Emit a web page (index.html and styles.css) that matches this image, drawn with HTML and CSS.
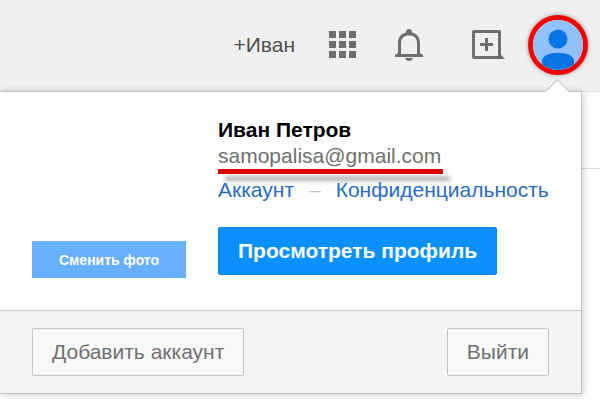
FILE: index.html
```html
<!DOCTYPE html>
<html lang="ru">
<head>
  <meta charset="utf-8">
  <meta name="viewport" content="width=device-width,initial-scale=1">
  <title>Аккаунт</title>
  <link rel="stylesheet" href="styles.css">
</head>
<body>
  <header class="topbar">
    <a class="plus-name" href="#">+Иван</a>
    <button class="icon-btn apps" type="button" aria-label="Приложения">
      <svg width="27" height="27" viewBox="0 0 27 27" fill="#6e6e6e">
        <path d="M0 0h7v7H0zM10 0h7v7h-7zM20 0h7v7h-7zM0 10h7v7H0zM10 10h7v7h-7zM20 10h7v7h-7zM0 20h7v7H0zM10 20h7v7h-7zM20 20h7v7h-7z"/>
      </svg>
    </button>
    <button class="icon-btn bell" type="button" aria-label="Уведомления">
      <svg width="28" height="32" viewBox="0 0 28 32" fill="#6e6e6e">
        <path d="M11 3.500V3a3 3 0 0 1 6 0v.5c5 1 8 5 8 10.500v10l3 2v2H0v-2l3-2V14C3 8.500 6 4.500 11 3.500zM6 25h16V14c0-5-3-7.500-8-7.500S6 9 6 14z" fill-rule="evenodd"/>
        <path d="M10 29h8c-1 4-7 4-8 0z"/>
      </svg>
    </button>
    <button class="icon-btn share" type="button" aria-label="Поделиться">
      <svg width="33" height="29" viewBox="0 0 33 29" fill="#6e6e6e">
        <path d="M2 0h25q2 0 2 2v23l4 4H2q-2 0-2-2V2q0-2 2-2zM3 3v23h23V3z" fill-rule="evenodd"/>
        <path d="M13 8h3v5h5v3h-5v5h-3v-5H8v-3h5z"/>
      </svg>
    </button>
    <button class="icon-btn avatar" type="button" aria-label="Иван Петров">
      <svg width="50" height="50" viewBox="1 1 50 50">
        <circle cx="26" cy="26" r="26" fill="#91c1fb"/>
        <circle cx="26" cy="20" r="9.500" fill="#0b74e5"/>
        <path d="M10 46v-4c0-11 32-11 32 0v4a26 26 0 0 1-32 0z" fill="#0b74e5"/>
      </svg>
    </button>
  </header>

  <main class="page">
    <div class="toolbar"></div>
    <section class="account-menu">
      <div class="profile">
        <button class="change-photo" type="button">Сменить фото</button>
        <div class="info">
          <div class="name">Иван Петров</div>
          <div class="email">samopalisa@gmail.com</div>
          <div class="links">
            <a href="#">Аккаунт</a>
            <span class="dash">–</span>
            <a href="#">Конфиденциальность</a>
          </div>
          <button class="view-profile" type="button">Просмотреть профиль</button>
        </div>
      </div>
      <div class="actions">
        <button class="btn" type="button">Добавить аккаунт</button>
        <button class="btn" type="button">Выйти</button>
      </div>
    </section>
  </main>
</body>
</html>
```
FILE: styles.css
```css
* {
  box-sizing: border-box;
}

body {
  display: flex;
  flex-direction: column;
  min-height: 100vh;
  margin: 0;
  background: #fff;
  font-family: "Liberation Sans", Arial, sans-serif;
  font-size: 21px;
  line-height: 26px;
}

button {
  margin: 0;
  font-family: inherit;
  cursor: pointer;
}

a {
  text-decoration: none;
}

/* top bar */
.topbar {
  display: flex;
  align-items: center;
  justify-content: flex-end;
  height: 92px;
  padding: 0 12px 2px 0;
  background: #f0f0f0;
  border-bottom: 1px solid #e0e0e0;
}

.plus-name {
  margin-right: 34px;
  color: #505050;
}

.icon-btn {
  padding: 0;
  border: 0;
  background: none;
}

.icon-btn svg {
  display: block;
}

.apps {
  margin-right: 39px;
}

.bell {
  margin-right: 49px;
}

.share {
  margin-right: 23px;
}

.avatar {
  border: 5px solid #f80000;
  border-radius: 50%;
  box-shadow: 0 0 4px rgba(0, 0, 0, .4);
}

.avatar svg {
  border-radius: 50%;
}

/* page under the bar */
.page {
  position: relative;
  flex: 1;
}

.toolbar {
  height: 77px;
  border-bottom: 1px solid #dcdcdc;
}

/* drop-down */
.account-menu {
  position: absolute;
  top: -1px;
  left: 0;
  right: 18px;
  background: #fff;
  border: 1px solid #c2c2c2;
  border-left: 0;
  box-shadow: 1px 1px 8px rgba(0, 0, 0, .2);
}

.account-menu::before {
  content: "";
  position: absolute;
  top: -9px;
  right: 14px;
  width: 18px;
  height: 18px;
  background: #fff;
  border: 1px solid #c2c2c2;
  border-width: 1px 0 0 1px;
  transform: rotate(45deg);
}

.profile {
  position: relative;
  display: flex;
  align-items: flex-end;
  gap: 32px;
  padding: 25px 32px 35px;
  background: #fff;
}

.change-photo {
  flex: none;
  width: 154px;
  height: 37px;
  margin-bottom: -3px;
  padding: 0;
  border: 0;
  background: #67b0ff;
  color: #fff;
  font-size: 14px;
  font-weight: bold;
}

.name {
  color: #000;
  font-weight: bold;
}

.email {
  width: 225px;
  color: #707070;
}

.email::after {
  content: "";
  display: block;
  height: 5px;
  background: #dc0000;
  box-shadow: 7px 7px 4px rgba(0, 0, 0, .3);
}

.links {
  position: relative;
  display: flex;
  gap: 15px;
  padding: 3px 0 24px;
  white-space: nowrap;
}

.links a {
  color: #2a6bc4;
}

.dash {
  color: #c4c4c4;
}

.view-profile {
  height: 48px;
  padding: 0 19px;
  border: 1px solid #107fe6;
  border-radius: 2px;
  background: #0a90ff;
  color: #fff;
  font-size: 21px;
  font-weight: bold;
}

.actions {
  display: flex;
  justify-content: space-between;
  padding: 17px 32px;
  background: #f4f4f4;
  border-top: 1px solid #c6c6c6;
}

.btn {
  height: 48px;
  padding: 0 19px;
  border: 1px solid #c4c4c4;
  border-radius: 2px;
  background: #f8f8f8;
  color: #707070;
  font-size: 21px;
}
```
